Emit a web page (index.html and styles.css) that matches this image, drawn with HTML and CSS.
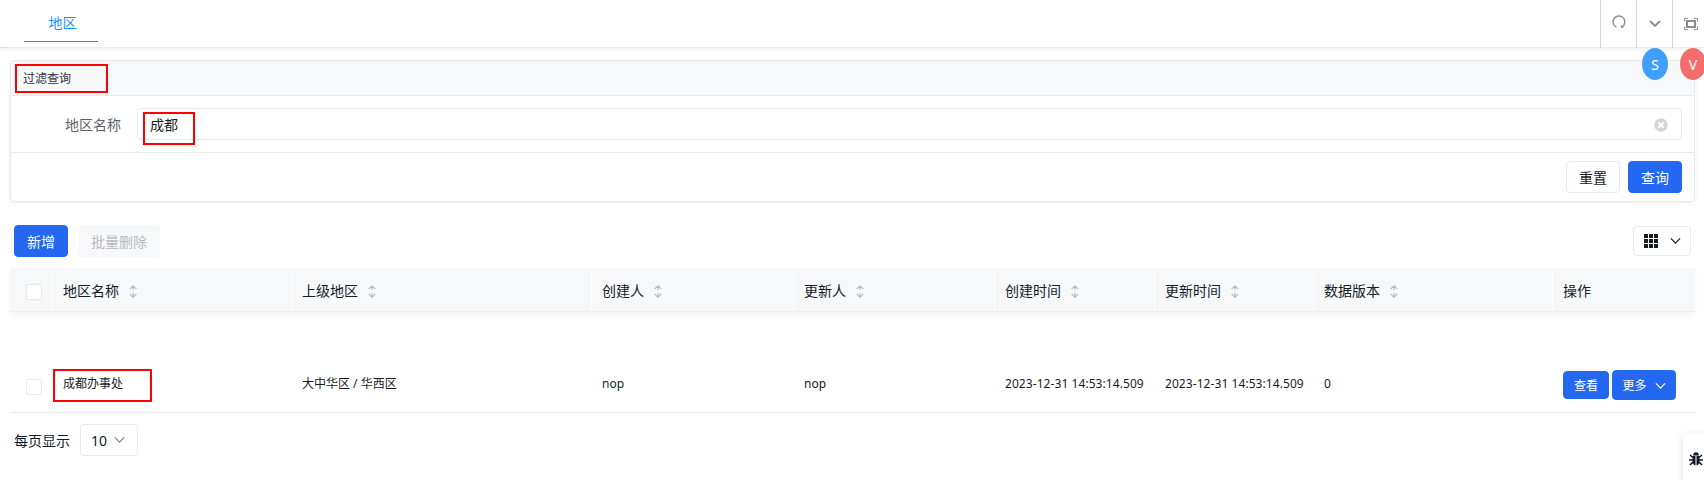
FILE: index.html
```html
<!DOCTYPE html>
<html lang="zh-CN">
<head>
<meta charset="utf-8">
<title>地区</title>
<link rel="stylesheet" href="styles.css">
</head>
<body>
<svg class="defs" aria-hidden="true">
  <symbol id="chev" viewBox="0 0 12 8"><path d="M1 1.2 6 6.3 11 1.2" fill="none" stroke="currentColor" stroke-width="1.3"/></symbol>
  <symbol id="sort" viewBox="0 0 8 13"><path d="M4 .8V5M.6 4.1 4 .9l3.4 3.2M4 8v4.2M.6 8.9 4 12.1l3.4-3.2" fill="none" stroke="currentColor" stroke-width="1.2"/></symbol>
</svg>
<header class="topbar">
  <div class="tab">地区</div>
  <div class="tools">
    <div class="tool tool-refresh"><svg width="14" height="14" viewBox="0 0 14 14"><path d="M3.6 11.7A5.9 5.9 0 1 1 10 11.9" fill="none" stroke="currentColor" stroke-width="1.4"/><path d="M8.9 9.8v3h3z" fill="currentColor"/><path d="M2.6 11.7h2.2" stroke="currentColor"/></svg></div>
    <div class="tool tool-down"><svg width="12" height="8" viewBox="0 0 12 8"><path d="M1 1 6 6l5-5" fill="none" stroke="currentColor" stroke-width="1.8"/></svg></div>
    <div class="tool tool-full"><svg width="14" height="12" viewBox="0 0 14 12"><path d="M.5 3.500V.5H4M10 .5h3.500v3M13.500 8.500v3H10M4 11.500H.5v-3" fill="none" stroke="currentColor"/><path d="M3 3h8v6H3z" fill="none" stroke="currentColor" stroke-width="2"/></svg></div>
  </div>
</header>
<div class="avatar avatar-s">S</div>
<div class="avatar avatar-v">V</div>
<main class="page">
  <section class="panel">
    <div class="panel-head">过滤查询</div>
    <div class="panel-body">
      <label class="label">地区名称</label>
      <div class="input"><span>成都</span><svg width="14" height="14" viewBox="0 0 14 14"><circle cx="7" cy="7" r="6.700" fill="#d4d6d9"/><path d="m4.300 4.300 5.400 5.400m0-5.400L4.300 9.700" stroke="#fff" stroke-width="1.900"/></svg></div>
    </div>
    <div class="panel-foot"><button class="btn">重置</button><button class="btn primary">查询</button></div>
  </section>
  <div class="toolbar">
    <button class="btn primary">新增</button>
    <button class="btn disabled">批量删除</button>
    <button class="btn columns"><svg width="14" height="14" viewBox="0 0 14 14"><path d="M0 0h4v4H0zM5 0h4v4H5zM10 0h4v4h-4zM0 5h4v4H0zM5 5h4v4H5zM10 5h4v4h-4zM0 10h4v4H0zM5 10h4v4H5zM10 10h4v4h-4z" fill="currentColor"/></svg><svg width="11" height="8"><use href="#chev"/></svg></button>
  </div>
  <div class="grid head">
    <div class="cell check"><i class="box"></i></div>
    <div class="cell">地区名称<svg class="sort"><use href="#sort"/></svg></div>
    <div class="cell">上级地区<svg class="sort"><use href="#sort"/></svg></div>
    <div class="cell">创建人<svg class="sort"><use href="#sort"/></svg></div>
    <div class="cell">更新人<svg class="sort"><use href="#sort"/></svg></div>
    <div class="cell">创建时间<svg class="sort"><use href="#sort"/></svg></div>
    <div class="cell">更新时间<svg class="sort"><use href="#sort"/></svg></div>
    <div class="cell">数据版本<svg class="sort"><use href="#sort"/></svg></div>
    <div class="cell">操作</div>
  </div>
  <div class="grid row">
    <div class="cell check"><i class="box"></i></div>
    <div class="cell">成都办事处</div>
    <div class="cell">大中华区 / 华西区</div>
    <div class="cell">nop</div>
    <div class="cell">nop</div>
    <div class="cell time">2023-12-31 14:53:14.509</div>
    <div class="cell time">2023-12-31 14:53:14.509</div>
    <div class="cell">0</div>
    <div class="cell actions"><button class="btn primary small">查看</button><button class="btn primary more">更多<svg width="11" height="8"><use href="#chev"/></svg></button></div>
  </div>
  <div class="pager"><span>每页显示</span><div class="select">10<svg width="11" height="8"><use href="#chev"/></svg></div></div>
</main>
<div class="mark mark-title"></div>
<div class="mark mark-input"></div>
<div class="mark mark-row"></div>
<div class="debug"><svg width="14" height="14" viewBox="0 0 14 14"><path d="M4.200 3.400a2.800 3.200 0 0 1 5.600 0zM3.500 4h3v9.400C4.600 13 3.500 11.600 3.500 9.500zM7.500 4h3v5.500c0 2.100-1.100 3.500-3 3.900z" fill="currentColor"/><path d="m1 3 3 2.500M13 3l-3 2.500M0 8h4m6 0h4M1 13l3-3m9 3-3-3" stroke="currentColor" stroke-width="1.600"/></svg></div>
</body>
</html>
```
FILE: styles.css
```css
* { box-sizing: border-box; }
body {
  margin: 0;
  height: 480px;
  overflow: hidden;
  position: relative;
  background: #fff;
  color: #151b26;
  font: 14px/20px "Noto Sans", "Noto Sans CJK SC", sans-serif;
}
svg { display: block; flex: none; }
.defs { position: absolute; width: 0; height: 0; }
.topbar {
  display: flex;
  justify-content: space-between;
  height: 48px;
  padding-left: 24px;
  border-bottom: 1px solid #eee;
  border-image: linear-gradient(to right, #d8d8d8 8px, #eee 8px) 1;
  box-shadow: 0 1px 4px rgba(0, 21, 41, .08);
}
.tab {
  width: 74px;
  height: 42px;
  padding: 13px 0 0 3px;
  text-align: center;
  color: #1890ff;
  border-bottom: 1px solid #1890ff;
}
.tools { display: flex; height: 48px; color: #8c8c8c; }
.tool {
  width: 36px;
  display: flex;
  justify-content: center;
  align-items: flex-start;
  border-left: 1px solid #d4d4d4;
}
.tool:last-child { width: 32px; }
.tool-refresh { padding-top: 15px; }
.tool-down { padding-top: 20px; }
.tool-full { padding: 18px 0 0 11px; justify-content: flex-start; }
.avatar {
  position: absolute;
  top: 48px;
  width: 26px;
  height: 32px;
  border-radius: 50%;
  color: #fff;
  line-height: 34px;
  text-align: center;
}
.avatar-s { left: 1642px; background: #409eff; }
.avatar-v { left: 1680px; background: #f56c6c; }
.page { padding: 12px 9px 0 10px; }
.panel {
  height: 142px;
  border: 1px solid #e8e9eb;
  border-radius: 4px;
  box-shadow: 0 1px 4px rgba(0, 0, 0, .06);
}
.panel-head {
  height: 35px;
  padding: 8px 12px;
  font-size: 12px;
  color: #303540;
  line-height: 19px;
  background: #f7f8fa;
  border-bottom: 1px solid #e8e9eb;
}
.panel-body {
  display: flex;
  height: 57px;
  padding: 12px 12px 12px 54px;
  border-bottom: 1px solid #e8e9eb;
}
.label { width: 72px; line-height: 33px; color: #5e626a; }
.input {
  flex: 1;
  display: flex;
  justify-content: space-between;
  align-items: center;
  height: 32px;
  padding: 1px 13px 0 12px;
  border: 1px solid #e8e9eb;
  border-radius: 4px;
}
.panel-foot { display: flex; justify-content: flex-end; gap: 8px; padding: 8px 12px; }
.btn {
  display: flex;
  align-items: center;
  justify-content: center;
  height: 32px;
  padding: 2px 12px 0;
  border: 1px solid #e8e9eb;
  border-radius: 4px;
  background: #fff;
  color: #151b26;
  font: inherit;
}
.primary { background: #2468f2; border-color: #2468f2; color: #fff; }
.disabled { background: #f7f8fa; border-color: #f7f8fa; color: #b8babf; }
.toolbar { display: flex; gap: 10px; height: 66px; padding: 23px 4px 0; }
.columns { width: 58px; height: 30px; margin: 1px 0 0 auto; padding: 0; gap: 12px; }
.grid {
  display: grid;
  grid-template-columns: 43px 239px 300px 202px 201px 160px 159px 239px 142px;
}
.head { height: 44px; background: #f7f8fa; border-bottom: 1px solid #eeeff1; box-shadow: 0 4px 6px rgba(0, 0, 0, .035); }
.cell { display: flex; padding-left: 10px; white-space: nowrap; }
.head .cell { padding-top: 13px; border-right: 1px solid #fff; }
.head .cell:last-child { border-right: 0; }
.head .check, .row .check { padding-left: 16px; }
.head .check { padding-top: 16px; }
.box { width: 16px; height: 16px; border: 1px solid #e8e9eb; border-radius: 2px; background: #fff; }
.sort { width: 8px; height: 13px; margin: 4px 0 0 10px; color: #b8babf; }
.row { height: 101px; border-bottom: 1px solid #e8e9eb; font-size: 12px; }
.row .cell { padding-top: 62px; }
.row .check { padding-top: 67px; }
.row .actions { padding-top: 58px; gap: 3px; }
.time { letter-spacing: .07px; }
.small { width: 46px; height: 28px; margin-top: 1px; padding: 2px 0 0; }
.more { width: 64px; height: 30px; padding: 2px 0 0; gap: 8px; }
.more svg { margin-top: -1px; }
.pager { display: flex; align-items: center; height: 32px; margin-top: 11px; padding-left: 4px; gap: 10px; }
.pager span { padding-top: 2px; }
.select {
  display: flex;
  align-items: center;
  width: 58px;
  height: 32px;
  padding: 1px 0 0 10px;
  gap: 7px;
  border: 1px solid #e8e9eb;
  border-radius: 4px;
}
.select svg { color: #84868c; margin-top: -2px; }
.mark { position: absolute; border: 2px solid #f00; }
.mark-title { left: 15px; top: 64px; width: 93px; height: 29px; }
.mark-input { left: 143px; top: 112px; width: 52px; height: 33px; }
.mark-row { left: 53px; top: 369px; width: 99px; height: 33px; }
.debug {
  position: absolute;
  left: 1683px;
  top: 434px;
  width: 30px;
  height: 60px;
  padding: 18px 0 0 6px;
  background: #fff;
  border-radius: 4px;
  box-shadow: 0 2px 8px rgba(0, 0, 0, .12);
}
```
